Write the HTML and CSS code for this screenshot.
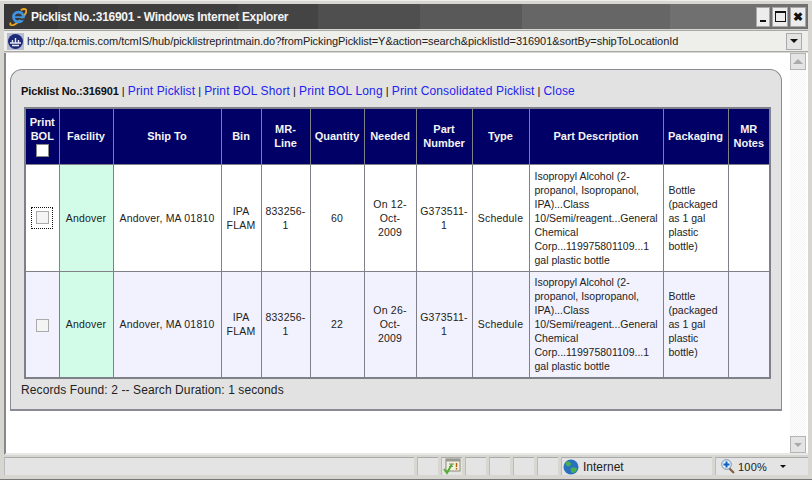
FILE: index.html
```html
<!DOCTYPE html>
<html>
<head>
  <meta charset="utf-8">
  <title>Picklist No.:316901</title>
  <link rel="stylesheet" href="styles.css">
</head>
<body>
<div class="window">
  <div class="titlebar">
    <svg class="ie-logo" width="18" height="18" viewBox="0 0 20 20">
      <path d="M2 16C0 19 3 20 6 18.500C11 16 17 9 19 5C20 1 17 0 13 2.500" fill="none" stroke="#eda51f" stroke-width="2"/>
      <circle cx="10.500" cy="10" r="5.500" fill="none" stroke="#3f95e6" stroke-width="3"/>
      <rect x="6" y="9.200" width="9" height="1.800" fill="#3f95e6"/>
      <rect x="12" y="11.500" width="6" height="2" fill="#3a3a3a"/>
    </svg>
    <span class="title-text">Picklist No.:316901 - Windows Internet Explorer</span>
    <div class="win-buttons">
      <span class="win-btn"><i class="min-glyph"></i></span>
      <span class="win-btn"><i class="max-glyph"></i></span>
      <span class="win-btn close-btn">✖</span>
    </div>
  </div>
  <div class="addressbar">
    <svg class="page-icon" width="17" height="17" viewBox="0 0 17 17">
      <rect x="0" y="0" width="17" height="17" fill="#b8bcd0"/>
      <circle cx="8.500" cy="8.500" r="7.500" fill="#1c2a78"/>
      <path d="M3 10h11M5 12.500h7M8.500 5v5M5.500 7v3M11.500 7v3" stroke="#e8e8f4" stroke-width="1.400" fill="none"/>
    </svg>
    <span class="url">http://qa.tcmis.com/tcmIS/hub/picklistreprintmain.do?fromPickingPicklist=Y&amp;action=search&amp;picklistId=316901&amp;sortBy=shipToLocationId</span>
    <span class="drop-btn"><i class="arrow-down"></i></span>
  </div>
  <div class="viewport">
    <div class="content">
      <div class="panel">
        <div class="panel-links">
          <b>Picklist No.:316901</b> |
          <a href="#">Print Picklist</a> |
          <a href="#">Print BOL Short</a> |
          <a href="#">Print BOL Long</a> |
          <a href="#">Print Consolidated Picklist</a> |
          <a href="#">Close</a>
        </div>
        <table class="grid">
          <colgroup>
            <col class="c1"><col class="c2"><col class="c3"><col class="c4"><col class="c5"><col class="c6">
            <col class="c7"><col class="c8"><col class="c9"><col class="c10"><col class="c11"><col class="c12">
          </colgroup>
          <tr class="head">
            <th>Print BOL<br><span class="head-check"></span></th>
            <th>Facility</th>
            <th>Ship To</th>
            <th>Bin</th>
            <th>MR-<br>Line</th>
            <th>Quantity</th>
            <th>Needed</th>
            <th>Part<br>Number</th>
            <th>Type</th>
            <th>Part Description</th>
            <th>Packaging</th>
            <th>MR<br>Notes</th>
          </tr>
          <tr>
            <td class="center"><span class="focus-box"><span class="check"></span></span></td>
            <td class="center facility">Andover</td>
            <td class="center">Andover, MA 01810</td>
            <td class="center">IPA<br>FLAM</td>
            <td class="center">833256-<br>1</td>
            <td class="center">60</td>
            <td class="center">On 12-<br>Oct-<br>2009</td>
            <td class="center">G373511-<br>1</td>
            <td class="center">Schedule</td>
            <td>Isopropyl Alcohol (2-<br>propanol, Isopropanol,<br>IPA)...Class<br>10/Semi/reagent...General<br>Chemical<br>Corp...119975801109...1<br>gal plastic bottle</td>
            <td>Bottle<br>(packaged<br>as 1 gal<br>plastic<br>bottle)</td>
            <td></td>
          </tr>
          <tr class="alt">
            <td class="center"><span class="check"></span></td>
            <td class="center facility">Andover</td>
            <td class="center">Andover, MA 01810</td>
            <td class="center">IPA<br>FLAM</td>
            <td class="center">833256-<br>1</td>
            <td class="center">22</td>
            <td class="center">On 26-<br>Oct-<br>2009</td>
            <td class="center">G373511-<br>1</td>
            <td class="center">Schedule</td>
            <td>Isopropyl Alcohol (2-<br>propanol, Isopropanol,<br>IPA)...Class<br>10/Semi/reagent...General<br>Chemical<br>Corp...119975801109...1<br>gal plastic bottle</td>
            <td>Bottle<br>(packaged<br>as 1 gal<br>plastic<br>bottle)</td>
            <td></td>
          </tr>
        </table>
        <div class="records">Records Found: 2 -- Search Duration: 1 seconds</div>
      </div>
    </div>
    <div class="scrollbar">
      <span class="scroll-btn"><i class="arrow-up"></i></span>
      <span class="scroll-track"></span>
      <span class="scroll-btn"><i class="arrow-down grey"></i></span>
    </div>
  </div>
  <div class="statusbar">
    <span class="st-cell st-main"></span>
    <span class="st-cell st-small"></span>
    <span class="st-cell st-small st-icon">
      <svg width="18" height="17" viewBox="0 0 18 17">
        <rect x="3" y="1" width="14" height="12" fill="#f4f0e0" stroke="#8a8a80"/>
        <rect x="3" y="1" width="14" height="2.500" fill="#9a9a90"/>
        <path d="M6 6h5M6 8.500h4" stroke="#8a8a80"/>
        <path d="M13.500 5v4M13.500 10v1.500" stroke="#b06000" stroke-width="1.400"/>
        <path d="M1 11l3 4 5-9" fill="none" stroke="#50b030" stroke-width="2"/>
      </svg>
    </span>
    <span class="st-cell st-small"></span>
    <span class="st-cell st-small"></span>
    <span class="st-cell st-small"></span>
    <span class="st-cell st-small"></span>
    <span class="st-cell st-zone">
      <svg width="16" height="16" viewBox="0 0 16 16">
        <circle cx="8" cy="8" r="7.500" fill="#2a70c0"/>
        <path d="M3 3c3-1 5 0 5 2S5 8 4 7 2 5 3 3zM8 9c3-1 6 0 6 1s-2 4-4 4-3-4-2-5z" fill="#48b050"/>
      </svg>
      Internet
    </span>
    <span class="st-cell st-zoom">
      <svg width="14" height="15" viewBox="0 0 14 15">
        <path d="M8 9l5 5" stroke="#806040" stroke-width="2.200"/>
        <circle cx="5.500" cy="5.500" r="4.800" fill="#e4eef8" stroke="#7090b0"/>
        <path d="M5.500 2.500v6M2.500 5.500h6" stroke="#1060c0" stroke-width="2"/>
      </svg>
      <span class="zoom-val">100%</span>
      <i class="arrow-down small"></i>
    </span>
  </div>
</div>
</body>
</html>
```
FILE: styles.css
```css
html, body { margin: 0; padding: 0; }
body { width: 812px; height: 480px; overflow: hidden; background: #d4d0c8; font-family: "Liberation Sans", Arial, sans-serif; }

.window { width: 812px; height: 480px; box-sizing: border-box; padding: 3px 4px 4px 4px; display: flex; flex-direction: column; background: #d8d6d0; border-top: 1px solid #eee; border-bottom: 1px solid #777; }

.titlebar { height: 25px; flex: none; display: flex; align-items: center; background: linear-gradient(to right, #383838 0, #383838 54px, #3e3e3e 54px, #3e3e3e 234px, #444 234px, #444 314px, #4f4f4f 314px, #4f4f4f 416px, #595959 416px, #595959 518px, #666 518px, #666 666px, #707070 666px); }
.ie-logo { margin-left: 5px; flex: none; }
.title-text { margin-left: 4px; color: #f4f4f4; font-size: 12px; font-weight: bold; white-space: nowrap; flex: 1; letter-spacing: -0.3px; }
.win-buttons { display: flex; align-items: center; gap: 2px; margin-right: 2px; }
.win-btn { width: 14px; height: 20px; box-sizing: border-box; background: #ececec; border: 1px solid #a8a8a8; display: flex; align-items: center; justify-content: center; font-size: 12px; color: #111; }
.win-btn + .win-btn { width: 16px; }
.close-btn { font-weight: bold; }
.min-glyph { width: 6px; height: 2px; background: #111; margin-top: 9px; }
.max-glyph { width: 9px; height: 8px; border: 1px solid #111; border-top-width: 2px; }

.addressbar { height: 22px; flex: none; margin-top: 1px; display: flex; align-items: center; background: #eeeeea; border-top: 1px solid #a8a8a8; border-bottom: 1px solid #a8a8a8; box-sizing: border-box; }
.page-icon { margin-left: 3px; flex: none; }
.url { margin-left: 3px; font-size: 11px; color: #222; white-space: nowrap; flex: 1; letter-spacing: -0.06px; }
.drop-btn { width: 16px; height: 17px; margin-right: 6px; box-sizing: border-box; background: #e4e4e4; border: 1px solid #aaa; display: flex; align-items: center; justify-content: center; }
.arrow-down { width: 0; height: 0; border-left: 4px solid transparent; border-right: 4px solid transparent; border-top: 4px solid #111; }
.arrow-down.grey { border-top-color: #aaa; }
.arrow-down.small { border-left-width: 3px; border-right-width: 3px; border-top-width: 3px; margin-left: 10px; }
.arrow-up { width: 0; height: 0; border-left: 5px solid transparent; border-right: 5px solid transparent; border-bottom: 5px solid #aaa; }

.viewport { flex: 1; display: flex; min-height: 0; margin-top: 1px; background: #fff; border-left: 2px solid #888; border-bottom: 2px solid #e8e8e8; }
.content { flex: 1; min-width: 0; padding: 16px 8px 0 4px; }
.panel { height: 342px; box-sizing: border-box; background: #e2e2e2; border: 1px solid #8a8a94; border-width: 1px 1px 2px 1px; border-radius: 12px 12px 0 0; padding: 14px 10px 0 10px; }
.panel-links { height: 23px; font-size: 11px; color: #111; white-space: nowrap; }
.panel-links b { letter-spacing: -0.1px; }
.panel-links a { color: #2222ee; text-decoration: none; font-size: 12px; letter-spacing: 0.15px; }

.grid { width: 747px; margin-left: 3px; table-layout: fixed; border-collapse: collapse; background: #fff; border: 2px solid #808088; font-size: 10.5px; color: #222; }
.grid th, .grid td { border: 1px solid #808088; padding: 0 5px; line-height: 14px; }
.grid th { background: #000066; color: #f4f4f4; font-size: 11px; font-weight: bold; padding: 0 2px; text-align: center; }
.grid .head { height: 56px; }
.grid tr { height: 107px; }
.grid .alt td { background: #f2f2fe; }
.grid .alt td.facility, .facility { background: #d2fce8; }
.center { text-align: center; }
.grid td.center { padding: 0 1px; letter-spacing: 0.2px; }

.c1 { width: 34px; } .c2 { width: 54px; } .c3 { width: 108px; } .c4 { width: 40px; }
.c5 { width: 49px; } .c6 { width: 54px; } .c7 { width: 52px; } .c8 { width: 56px; }
.c9 { width: 57px; } .c10 { width: 134px; } .c11 { width: 65px; } .c12 { width: 42px; }

.head-check { display: block; width: 11px; height: 11px; margin: 1px auto 0; background: #fff; border: 1px solid #888; }
.check { display: inline-block; width: 11px; height: 11px; background: #f4f4f4; border: 1px solid #aaa; vertical-align: middle; }
.focus-box { display: inline-flex; width: 20px; height: 20px; align-items: center; justify-content: center; border: 1px dotted #111; }

.records { margin-top: 4px; font-size: 12px; color: #222; letter-spacing: 0.1px; }

.scrollbar { width: 16px; flex: none; margin-right: 2px; display: flex; flex-direction: column; background: repeating-conic-gradient(#f4f4f4 0 25%, #fff 0 50%) 0 0 / 2px 2px; }
.scroll-btn { height: 17px; flex: none; background: #e4e4e4; border: 1px solid #b4b4b4; box-sizing: border-box; display: flex; align-items: center; justify-content: center; }
.scroll-track { flex: 1; }

.statusbar { height: 18px; flex: none; margin-top: 2px; display: flex; align-items: stretch; gap: 3px; font-size: 11px; color: #222; }
.st-cell { background: #e4e4e4; border-top: 1px solid #aaa; border-left: 1px solid #bbb; box-sizing: border-box; display: flex; align-items: center; }
.st-main { width: 410px; }
.st-small { width: 21px; }
.st-icon { justify-content: center; }
.st-zone { width: 151px; gap: 4px; padding-left: 1px; font-size: 12px; }
.st-zoom { flex: 1; gap: 3px; padding-left: 5px; }
.zoom-val { font-size: 11px; letter-spacing: 0.2px; }
```
